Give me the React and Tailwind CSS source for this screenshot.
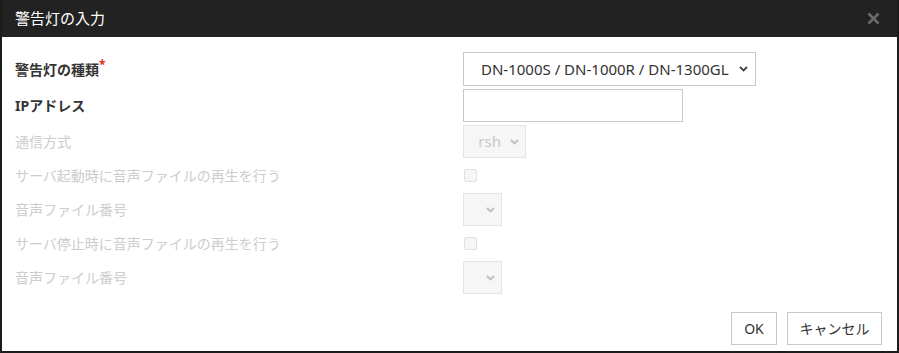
import React from 'react'

const font = { fontFamily: '"Noto Sans", "Noto Sans CJK JP", sans-serif' }

function Chevron({ className }) {
  return (
    <svg width="9" height="6" viewBox="0 0 9 6" className={className}>
      <path d="M1 1 L4.5 4.5 L8 1" fill="none" stroke="currentColor" strokeWidth="1.8" />
    </svg>
  )
}

function Row({ label, required, disabled, bold, h = 'h-[33px]', children }) {
  return (
    <div className={`flex items-center ${h}`}>
      <div
        className={`w-[448px] shrink-0 text-[14px] ${bold ? 'font-bold text-[#333]' : ''} ${disabled ? 'text-[#cdcdcd]' : ''}`}
      >
        {label}
        {required && <span className="text-[#e0301e] align-top text-[12px] leading-none">*</span>}
      </div>
      {children}
    </div>
  )
}

function DisabledSelect({ w, text }) {
  return (
    <div className={`${w} h-[33px] border border-[#e4e4e4] bg-[#f6f6f6] flex items-center justify-end pr-[6px] text-[#c8c8c8] text-[15px]`}>
      {text && <span className="mr-[9px]">{text}</span>}
      <Chevron className="text-[#bdbdbd]" />
    </div>
  )
}

export default function App() {
  return (
    <div className="w-[899px] h-[353px] bg-white border-x-2 border-b-2 border-[#1c1c1c] flex flex-col" style={font}>
      <div className="h-[37px] shrink-0 bg-[#222222] flex items-center justify-between pl-[13px] pr-[17px]">
        <span className="text-white text-[15px]">警告灯の入力</span>
        <svg width="13" height="13" viewBox="0 0 13 13" className="text-[#6a6a6a]">
          <path d="M1.5 1.5 L11.5 11.5 M11.5 1.5 L1.5 11.5" stroke="currentColor" strokeWidth="2.6" />
        </svg>
      </div>
      <div className="flex flex-col gap-[3px] pl-[13px] pt-[15px]">
        <Row label="警告灯の種類" required bold h="h-[34px]">
          <div className="w-[293px] h-[34px] border border-[#c8c8c8] flex items-center justify-between pl-[17px] pr-[7px] text-[15px] text-[#333]">
            <span>DN-1000S / DN-1000R / DN-1300GL</span>
            <Chevron className="text-[#444]" />
          </div>
        </Row>
        <Row label="IPアドレス" bold>
          <div className="w-[220px] h-[33px] border border-[#c8c8c8] bg-white" />
        </Row>
        <Row label="通信方式" disabled>
          <DisabledSelect w="w-[63px]" text="rsh" />
        </Row>
        <Row label="サーバ起動時に音声ファイルの再生を行う" disabled h="h-[29px]">
          <div className="w-[13px] h-[13px] ml-[1px] border border-[#e0e0e0] bg-[#f6f6f6] rounded-[2px]" />
        </Row>
        <Row label="音声ファイル番号" disabled>
          <DisabledSelect w="w-[39px]" />
        </Row>
        <Row label="サーバ停止時に音声ファイルの再生を行う" disabled h="h-[29px]">
          <div className="w-[13px] h-[13px] ml-[1px] border border-[#e0e0e0] bg-[#f6f6f6] rounded-[2px]" />
        </Row>
        <Row label="音声ファイル番号" disabled>
          <DisabledSelect w="w-[39px]" />
        </Row>
      </div>
      <div className="flex justify-end gap-[10px] pr-[15px] mt-[18px]">
        <button className="h-[33px] w-[46px] border border-[#c8c8c8] bg-white text-[14px] text-[#333]">OK</button>
        <button className="h-[33px] w-[95px] border border-[#c8c8c8] bg-white text-[14px] text-[#333]">キャンセル</button>
      </div>
    </div>
  )
}
